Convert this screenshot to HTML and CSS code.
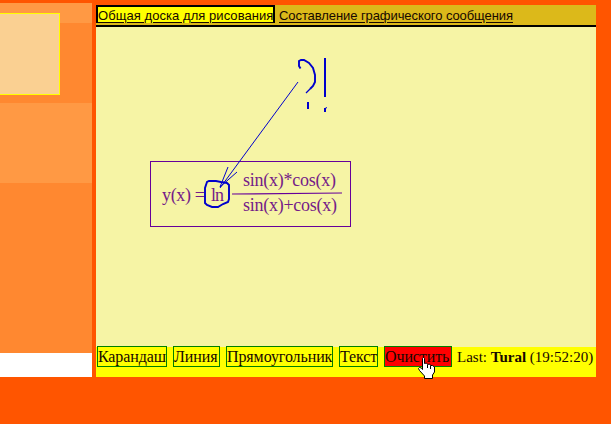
FILE: index.html
```html
<!DOCTYPE html>
<html lang="ru">
<head>
<meta charset="utf-8">
<title>Общая доска для рисования</title>
<link rel="stylesheet" href="styles.css">
</head>
<body>
<div class="page">
  <aside class="side"><div class="note"></div></aside>
  <main class="board">
    <nav class="tabs">
      <a class="tab active"><span>Общая доска для рисования</span></a>
      <a class="tab other"><span>Составление графического сообщения</span></a>
    </nav>
    <svg class="canvas" width="500" height="320" viewBox="96 27 500 320">
      <rect x="150.5" y="161.5" width="200" height="65" fill="none" stroke="#66009a"/>
      <g class="formula">
        <text x="162" y="201" textLength="43">y(x) =</text>
        <text x="211" y="201" textLength="13">ln</text>
        <text x="243" y="186" textLength="93">sin(x)*cos(x)</text>
        <text x="243" y="211" textLength="94">sin(x)+cos(x)</text>
      </g>
      <path d="M232 194L342 193" stroke="#66009a" stroke-width="1.2" fill="none"/>
      <g fill="none" stroke="#0000cc">
        <path d="M298 82L220 188M220 187L228 167M220 187L237 172" stroke-width="1"/>
        <path d="M207 182L205 188L205 203L207 205L212 207L218 207L223 204L228 202L229 199L229 185L227 183L221 182L216 181L209 181Z" stroke-width="1.9"/>
        <path d="M300.500 68.500L299 66L299 61L301 60L304 60L309 63L313 68L315 75L315 82L313 86L310 89" stroke-width="1.9"/>
        <path d="M310 89L306 93" stroke-width="1.2"/>
        <path d="M325 58V97M308 102V109M325 108V112" stroke-width="2"/>
        <path d="M325 108.500L327 107.500" stroke-width="1"/>
      </g>
    </svg>
    <footer class="tools">
      <a class="tool pencil"><span>Карандаш</span></a>
      <a class="tool line"><span>Линия</span></a>
      <a class="tool rectangle"><span>Прямоугольник</span></a>
      <a class="tool text"><span>Текст</span></a>
      <a class="tool clear"><span>Очистить</span></a>
      <span class="last">Last: <b>Tural</b> (19:52:20)</span>
    </footer>
  </main>
</div>
<svg class="cursor" width="18" height="22" viewBox="0 0 18 22">
  <path d="M4.500 1.500L5.500 .5L6.500 1.500V6.500L8.500 6L9.500 7.500L11.500 7L12.500 8.500H14.500L16.500 10V15L14.500 18V21.500H6.500V19L1.500 13.500L.5 11.500L1.500 10.500L3.500 11L4.500 12.500Z" fill="#fff" stroke="#000"/>
  <path d="M9.500 8V11M12.500 9V12" stroke="#000" fill="none"/>
</svg>
</body>
</html>
```
FILE: styles.css
```css
* { box-sizing: border-box; }
body {
  margin: 0;
  width: 611px;
  height: 424px;
  overflow: hidden;
  background: #ff5500;
}
.page { display: flex; gap: 4px; height: 377px; }
.side {
  width: 92px;
  margin-top: 3px;
  padding-top: 10px;
  background: linear-gradient(#ff9944 0 20px, #ff8830 20px 100px, #ff9944 100px 180px, #ff8830 180px 350px, #fff 350px);
}
.note {
  width: 60px;
  height: 82px;
  background: #fad092;
  border: 1px solid #ff0;
  border-left: 0;
}
.board { width: 500px; margin-top: 5px; background: #f6f4a5; }
.tabs {
  display: flex;
  height: 22px;
  background: #dcb91a;
  border-bottom: 2px solid #000;
  font: 13px/17px "Liberation Sans", Arial, sans-serif;
  color: #170800;
}
.tab { height: 18px; white-space: nowrap; text-decoration: underline; text-underline-offset: 2px; text-decoration-thickness: 1px; }
.tab.active {
  width: 179px;
  flex: none;
  letter-spacing: 0.06px;
  background: #ff0;
  border: solid #000;
  border-width: 2px 2px 0;
}
.tab.other { padding: 2px 0 0 4px; letter-spacing: -0.08px; }
.canvas { display: block; }
.formula { font: 18px "Liberation Serif", "Times New Roman", serif; fill: #751b88; }
.tools {
  display: flex;
  height: 30px;
  padding-left: 1px;
  gap: 6px;
  background: #ff0;
  font: 16px/19px "Liberation Serif", "Times New Roman", serif;
  color: #170800;
}
.tool { height: 21px; margin-top: -1px; border: 1px solid #008000; white-space: nowrap; flex: none; letter-spacing: -0.1px; }
.pencil { width: 70px; }
.line { width: 47px; }
.rectangle { width: 107px; }
.text { width: 39px; }
.clear { width: 68px; background: #f00; }
.last { margin-left: -1px; white-space: nowrap; font-size: 15px; line-height: 21px; }
.cursor { position: absolute; left: 418px; top: 357px; }
```
